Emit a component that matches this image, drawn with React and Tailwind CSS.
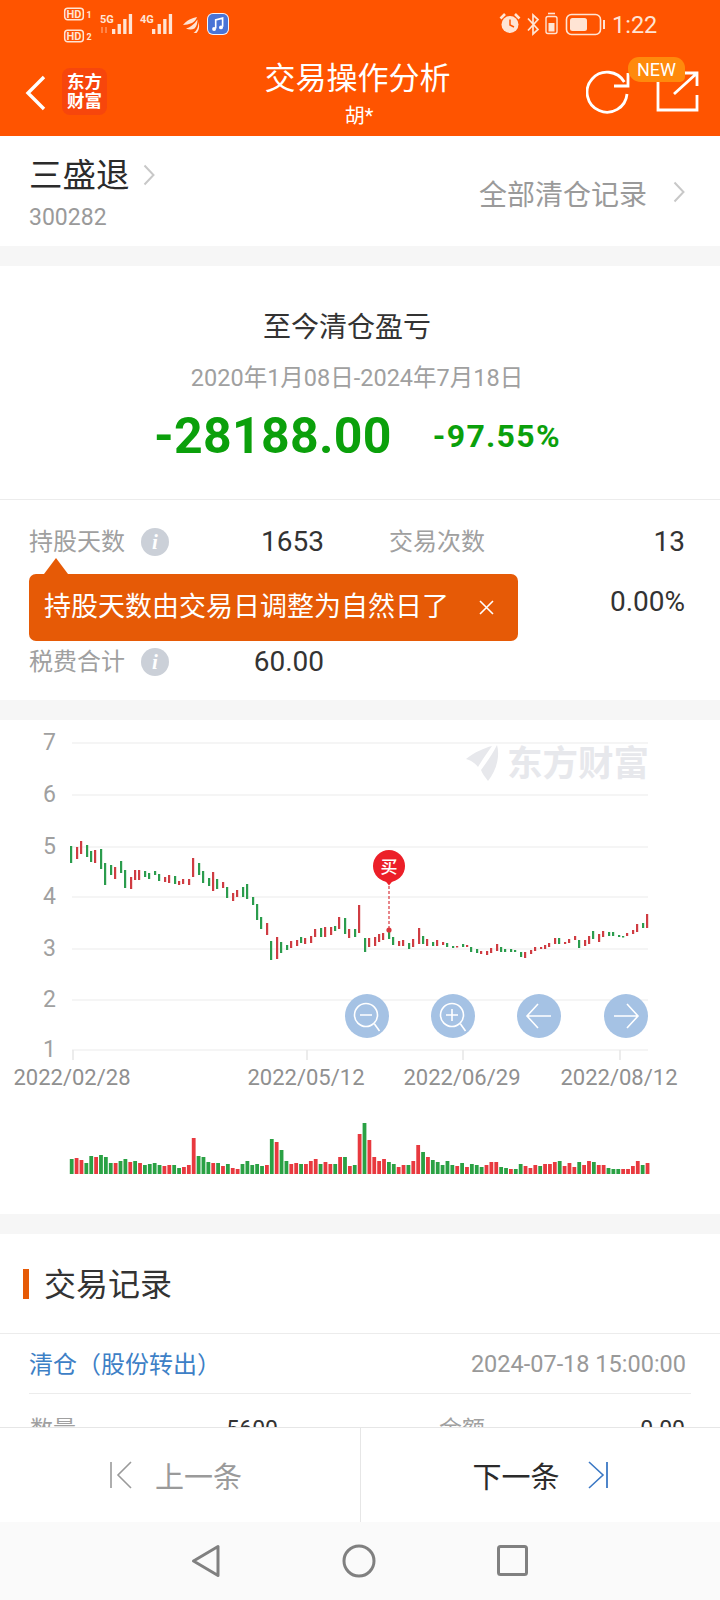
const candles = [
  [71, 846, 863, 'g'], [77, 847, 859, 'r'], [81, 841, 854, 'r'], [87, 845, 857, 'g'], [91, 851, 862, 'g'], [95, 850, 863, 'r'],
  [101, 849, 869, 'g'], [105, 863, 885, 'g'], [111, 865, 875, 'g'], [115, 867, 879, 'r'], [121, 861, 873, 'g'], [125, 870, 888, 'g'],
  [131, 877, 889, 'r'], [135, 870, 880, 'r'], [139, 870, 880, 'r'], [145, 871, 877, 'g'], [149, 873, 879, 'g'], [155, 871, 875, 'g'],
  [159, 874, 881, 'g'], [165, 877, 882, 'r'], [169, 875, 883, 'r'], [175, 876, 884, 'g'], [179, 881, 885, 'r'], [183, 879, 884, 'r'],
  [189, 879, 885, 'r'], [193, 858, 877, 'r'], [199, 863, 875, 'g'], [203, 871, 883, 'g'], [209, 878, 886, 'g'], [213, 872, 891, 'r'],
  [217, 879, 889, 'g'], [223, 882, 888, 'r'], [227, 887, 898, 'g'], [233, 893, 901, 'r'], [237, 890, 897, 'r'], [243, 887, 897, 'g'],
  [247, 884, 899, 'g'], [253, 897, 905, 'g'], [257, 904, 920, 'g'], [261, 917, 929, 'g'], [267, 923, 935, 'r'], [271, 941, 960, 'g'],
  [277, 937, 959, 'r'], [281, 942, 953, 'g'], [287, 945, 950, 'g'], [291, 941, 948, 'r'], [297, 940, 946, 'r'], [301, 937, 943, 'g'],
  [305, 938, 944, 'r'], [311, 936, 943, 'r'], [315, 929, 937, 'r'], [321, 928, 937, 'g'], [325, 927, 937, 'r'], [331, 927, 935, 'r'],
  [335, 926, 931, 'g'], [339, 917, 929, 'r'], [345, 918, 934, 'g'], [349, 929, 938, 'r'], [355, 929, 937, 'g'], [359, 905, 933, 'r'],
  [365, 938, 952, 'g'], [369, 938, 947, 'r'], [375, 937, 946, 'r'], [379, 934, 942, 'r'], [383, 933, 940, 'r'], [389, 931, 939, 'g'],
  [393, 937, 945, 'g'], [399, 941, 946, 'r'], [403, 940, 946, 'r'], [409, 943, 949, 'g'], [413, 939, 947, 'r'], [419, 928, 944, 'r'],
  [423, 936, 944, 'g'], [427, 939, 946, 'r'], [433, 942, 946, 'g'], [437, 940, 946, 'r'], [443, 942, 945, 'r'], [447, 943, 947, 'g'],
  [453, 946, 948, 'g'], [457, 946, 947.5, 'r'], [463, 944, 947, 'g'], [467, 945, 947, 'r'], [471, 947, 952, 'g'], [477, 949, 953, 'g'],
  [481, 951, 954, 'r'], [487, 951, 955, 'r'], [491, 948, 953, 'r'], [497, 944, 951, 'r'], [501, 947, 952, 'g'], [505, 949, 952, 'g'],
  [511, 949, 952, 'g'], [515, 950, 952, 'g'], [521, 952, 957, 'g'], [525, 952, 958, 'r'], [531, 950, 954, 'r'], [535, 947, 951, 'r'],
  [541, 947, 949, 'r'], [545, 945, 949, 'r'], [549, 943, 947, 'r'], [555, 938, 944, 'r'], [559, 938, 944, 'g'], [565, 942, 944, 'r'],
  [569, 939, 943, 'r'], [575, 936, 940, 'r'], [579, 940, 948, 'g'], [585, 940, 946, 'r'], [589, 936, 944, 'r'], [593, 931, 939, 'g'],
  [599, 934, 942, 'r'], [603, 931, 937, 'r'], [609, 932, 936, 'g'], [613, 932, 936, 'g'], [619, 935, 937, 'g'], [623, 936, 937.5, 'g'],
  [627, 933, 936, 'r'], [633, 930, 934, 'r'], [637, 924, 932, 'r'], [643, 923, 928, 'g'], [647, 914, 928, 'r'],
];

// volume bars: height above the baseline, colour
const volumes = [
  [15, 'g'], [16, 'r'], [14, 'r'], [11, 'g'], [18, 'g'], [17, 'r'], [19, 'g'], [17, 'g'], [11, 'g'], [11, 'r'], [13, 'g'], [15, 'g'],
  [12, 'r'], [13, 'g'], [11, 'r'], [9, 'g'], [10, 'g'], [11, 'g'], [9, 'g'], [8, 'r'], [9, 'r'], [9, 'g'], [6, 'g'], [7, 'r'],
  [9, 'r'], [36, 'r'], [18, 'g'], [17, 'g'], [12, 'g'], [11, 'r'], [11, 'g'], [8, 'r'], [10, 'g'], [6, 'r'], [5, 'r'], [10, 'g'],
  [13, 'g'], [9, 'g'], [10, 'g'], [8, 'g'], [9, 'r'], [35, 'g'], [32, 'r'], [24, 'g'], [13, 'g'], [10, 'r'], [11, 'r'], [10, 'g'],
  [10, 'r'], [13, 'r'], [15, 'r'], [10, 'g'], [12, 'r'], [10, 'r'], [10, 'g'], [17, 'r'], [17, 'g'], [8, 'r'], [9, 'g'], [40, 'r'],
  [51, 'g'], [34, 'r'], [17, 'r'], [13, 'r'], [15, 'r'], [12, 'g'], [10, 'g'], [7, 'r'], [9, 'r'], [9, 'g'], [13, 'r'], [29, 'r'],
  [22, 'g'], [17, 'r'], [14, 'g'], [12, 'g'], [9, 'g'], [13, 'g'], [9, 'g'], [8, 'r'], [11, 'g'], [7, 'r'], [10, 'g'], [9, 'g'],
  [7, 'g'], [9, 'r'], [12, 'r'], [12, 'r'], [7, 'g'], [6, 'g'], [5, 'r'], [5, 'g'], [10, 'g'], [8, 'r'], [6, 'r'], [9, 'r'],
  [8, 'g'], [10, 'r'], [10, 'r'], [12, 'r'], [13, 'g'], [8, 'r'], [11, 'r'], [7, 'r'], [12, 'g'], [9, 'r'], [13, 'r'], [12, 'g'],
  [9, 'r'], [9, 'r'], [6, 'g'], [5, 'g'], [5, 'g'], [5, 'r'], [5, 'r'], [8, 'r'], [13, 'r'], [9, 'g'], [11, 'r'],
];

const gridLines = [
  { label: '7', y: 743 }, { label: '6', y: 795 }, { label: '5', y: 847 }, { label: '4', y: 897 },
  { label: '3', y: 949 }, { label: '2', y: 1000 }, { label: '1', y: 1050 },
];
const dates = [
  { label: '2022/02/28', x: 72 }, { label: '2022/05/12', x: 306 }, { label: '2022/06/29', x: 462 }, { label: '2022/08/12', x: 619 },
];

function StatusBar() {
  const signal = (x) => [0, 1, 2, 3].map((i) => (
    <rect key={i} x={x + i * 5.6} y={29 - i * 5} width="3.300" height={5 + i * 5} fill="#ffe4d4" />
  ));
  return (
    <div className="relative h-[48px] text-[#ffe4d4]">
      <svg width="240" height="48" className="absolute left-[60px] top-0">
        <rect x="4.700" y="8.200" width="18.600" height="11.600" rx="3" fill="none" stroke="#ffe4d4" strokeWidth="1.500" />
        <text x="14" y="18" textAnchor="middle" fontSize="11" fontWeight="700" fill="#ffe4d4">HD</text>
        <text x="29" y="18" textAnchor="middle" fontSize="9" fontWeight="700" fill="#ffe4d4">1</text>
        <rect x="4.700" y="30.200" width="18.600" height="11.600" rx="3" fill="none" stroke="#ffe4d4" strokeWidth="1.500" />
        <text x="14" y="40" textAnchor="middle" fontSize="11" fontWeight="700" fill="#ffe4d4">HD</text>
        <text x="29" y="40" textAnchor="middle" fontSize="9" fontWeight="700" fill="#ffe4d4">2</text>
        <text x="40" y="23" fontSize="11" fontWeight="700" fill="#ffe4d4">5G</text>
        <text x="80" y="23" fontSize="11" fontWeight="700" fill="#ffe4d4">4G</text>
        <path d="M42 27v6M46 27v6" stroke="#ffb48f" strokeWidth="1" />
        <g>{signal(52)}</g>
        <g>{signal(92)}</g>
        {/* app notification swoosh */}
        <path d="M123 25c4-5 9-7 14-8-1 3-3 5-5 6-3 1-6 2-9 2z" fill="#ffe4d4" />
        <path d="M126 28.500c4-1 8-4 11.500-9 0 4-1 7-3 9-3 1.500-6 1-8.500 0z" fill="#ffe4d4" />
        <path d="M133.500 33c3-2 5-6 5-11 1 4 1 8-2 11z" fill="#ffe4d4" />
      </svg>
      <div className="absolute left-[208px] top-[14px] flex h-[20px] w-[20px] items-center justify-center rounded-[5px] bg-[#4a74d6] ring-1 ring-[#f3f3fb]">
        <svg width="14" height="15" viewBox="0 0 12 13" fill="none">
          <path d="M4 10V2.500L10 1v7.500" stroke="#fff" strokeWidth="1.400" />
          <circle cx="2.600" cy="10.400" r="1.700" fill="#fff" />
          <circle cx="8.600" cy="9" r="1.700" fill="#fff" />
        </svg>
      </div>
      <svg width="110" height="48" className="absolute left-[498px] top-0" fill="none">
        <circle cx="12" cy="24.500" r="8.500" fill="#ffe4d4" />
        <path d="M12 19.500V25L16 27" stroke="#ff5500" strokeWidth="1.500" />
        <path d="M2.500 18.500l4.500-4.500M21.500 18.500l-4.500-4.500" stroke="#ffe4d4" strokeWidth="2.600" />
        <path d="M30 18.500l10 11-5 4.500V15l5 4.500-10 11" stroke="#ffe4d4" strokeWidth="1.700" />
        <rect x="48" y="16.500" width="11" height="17" rx="2" stroke="#ffe4d4" strokeWidth="1.400" />
        <rect x="50.500" y="23" width="6" height="8.500" fill="#ffe4d4" />
        <path d="M50 13.500h7" stroke="#ffe4d4" strokeWidth="1.600" />
        <rect x="68.500" y="14.500" width="34" height="20" rx="5" stroke="#ffe4d4" strokeWidth="1.600" />
        <rect x="72" y="18" width="17" height="13" rx="2.500" fill="#ffe4d4" />
        <path d="M106 20v9" stroke="#ffe4d4" strokeWidth="2" />
      </svg>
      <span className="absolute left-[612px] top-[10px] text-[23.500px] leading-[30px]">1:22</span>
    </div>
  );
}

function Header() {
  return (
    <header className="h-[136px] shrink-0 bg-[#ff5400] text-white">
      <StatusBar />
      <div className="relative h-[88px]">
        <svg width="24" height="36" viewBox="0 0 24 36" fill="none" className="absolute left-[24px] top-[27px]">
          <path d="M20 2L4 18l16 16" stroke="#fff" strokeWidth="3.400" />
        </svg>
        <div className="absolute left-[62px] top-[20px] flex h-[47px] w-[45px] items-center justify-center rounded-[8px] bg-[#f7460c] text-center text-[17.500px] font-bold leading-[19px]">
          东方<br />财富
        </div>
        <div className="flex flex-col items-center pr-[5px] pt-[13px]">
          <span className="text-[31px] leading-[36px]">交易操作分析</span>
          <span className="mt-[7px] pl-[3px] text-[20px] leading-[24px]">胡*</span>
        </div>
        <svg width="44" height="44" viewBox="0 0 44 44" fill="none" className="absolute left-[586px] top-[22px]">
          <path d="M38.300 12A20 20 0 1 0 41 24" stroke="#fff" strokeWidth="2.800" />
          <path d="M42 3v13H28" stroke="#fff" strokeWidth="2.800" />
        </svg>
        <svg width="44" height="44" viewBox="0 0 44 44" fill="none" className="absolute left-[656px] top-[22px]">
          <path d="M24 3H2v37h39V25" stroke="#fff" strokeWidth="2.800" />
          <path d="M18 24L40 4M28 3h13v13" stroke="#fff" strokeWidth="2.800" />
        </svg>
        <span className="absolute left-[628px] top-[9px] flex h-[25px] w-[57px] items-center justify-center rounded-t-[11px] rounded-bl-[13px] rounded-br-[5px] bg-[#ff8a0c] text-[18px] leading-none">NEW</span>
      </div>
    </header>
  );
}

function Chevron({ className }) {
  return (
    <svg width="12" height="22" viewBox="0 0 12 22" fill="none" className={className}>
      <path d="M1.500 1.500L10.500 11l-9 9.500" stroke="#c8c8c8" strokeWidth="2" />
    </svg>
  );
}

function StockRow() {
  return (
    <div className="flex h-[110px] shrink-0 items-start justify-between bg-white pl-[29px] pr-[35px]">
      <div>
        <div className="flex items-center pt-[20px]">
          <span className="text-[33.500px] leading-[40px] text-[#2b2b2b]">三盛退</span>
          <Chevron className="ml-[13px] -mt-[2px]" />
        </div>
        <div className="mt-[7px] text-[23px] leading-[30px] text-[#9a9a9a]">300282</div>
      </div>
      <div className="flex items-center pt-[38px]">
        <span className="pt-[4px] text-[28px] leading-[36px] text-[#9a9a9a]">全部清仓记录</span>
        <Chevron className="ml-[26px] -mt-[4px]" />
      </div>
    </div>
  );
}

function InfoDot() {
  return (
    <span className="ml-[16px] flex h-[28px] w-[28px] items-center justify-center rounded-full bg-[#cbd0d8] font-['Liberation_Serif',serif] text-[21px] font-bold italic leading-none text-white">i</span>
  );
}

function Summary() {
  return (
    <section className="relative h-[434px] shrink-0 bg-white">
      <div className="flex h-[234px] flex-col items-center border-b border-[#ececec]">
        <div className="mt-[42px] pr-[26px] text-[28px] leading-[40px] text-[#333]">至今清仓盈亏</div>
        <div className="mt-[14px] pr-[6px] text-[23.500px] leading-[32px] text-[#a0a0a0]">2020年1月08日-2024年7月18日</div>
        <div className="mt-[12px] flex items-center pr-[5px] font-bold text-[#0ba00b]">
          <span className="text-[50px] leading-[60px] tracking-[0.300px]">-28188.00</span>
          <span className="ml-[41px] text-[32px] leading-[60px] tracking-[1.300px]">-97.55%</span>
        </div>
      </div>
      <div className="pl-[29px] pr-[35px] pt-[12px] text-[28px]">
        <div className="flex h-[60px] items-center">
          <span className="text-[24px] text-[#a0a0a0]">持股天数</span>
          <InfoDot />
          <span className="w-[155px] text-right text-[#333]">1653</span>
          <span className="ml-[65px] text-[24px] text-[#a0a0a0]">交易次数</span>
          <span className="flex-1 text-right text-[#333]">13</span>
        </div>
        <div className="flex h-[60px] items-center justify-end">
          <span className="text-[#333]">0.00%</span>
        </div>
        <div className="flex h-[60px] items-center">
          <span className="text-[24px] text-[#a0a0a0]">税费合计</span>
          <InfoDot />
          <span className="w-[155px] text-right text-[#333]">60.00</span>
        </div>
      </div>
      {/* hint bubble under the holding days label */}
      <div className="absolute left-[29px] top-[308px] flex h-[67px] w-[489px] items-center rounded-[7px] bg-[#e65a06] pl-[15px] text-[27px] text-white">
        <span className="absolute left-[15px] -top-[16px] h-0 w-0 border-x-[12px] border-b-[16px] border-x-transparent border-b-[#e65a06]" />
        持股天数由交易日调整为自然日了
        <span className="ml-[29px]">
          <svg width="17" height="17" viewBox="0 0 17 17" fill="none">
            <path d="M2 2l13 13M15 2L2 15" stroke="#fff" strokeWidth="1.600" />
          </svg>
        </span>
      </div>
    </section>
  );
}

function RoundButton({ x }) {
  return <circle cx={x} cy="1016" r="22" fill="#a5c2e4" />;
}

function Chart() {
  const axisBase = 720;
  return (
    <section className="mt-[20px] h-[494px] shrink-0 bg-white">
      <svg width="720" height="494" viewBox={`0 ${axisBase} 720 494`} fill="none" className="block">
        {gridLines.map((g) => (
          <g key={g.label}>
            <path d={`M72 ${g.y}H648`} stroke="#f2f2f2" strokeWidth="1.600" />
            <text x="49.500" y={g.y + 7} textAnchor="middle" fontSize="23" fill="#a0a0a0">{g.label}</text>
          </g>
        ))}

        {/* watermark */}
        <path d="M466 759c9-7 18-11 26-13-4 6-10 14-14 21-3-4-8-7-12-8z" fill="#e7e8ec" />
        <path d="M497 745c3 10 0 25-9 36-3-4-6-8-7-11 6-8 12-17 16-25z" fill="#e7e8ec" />
        <text x="507" y="776" fontSize="35.500" fontWeight="700" fill="#e7e8ec" fontFamily="'Noto Sans CJK SC', sans-serif">东方财富</text>

        {candles.map(([x, top, bottom, c]) => (
          <rect key={x} x={x - 1} y={top} width="2.200" height={bottom - top} fill={c === 'r' ? '#cf3c42' : '#2b9c4d'} />
        ))}

        {/* buy marker */}
        <path d="M389 886v44" stroke="#d9363c" strokeWidth="1.200" strokeDasharray="3 2" />
        <circle cx="389" cy="930" r="2.600" fill="#d9363c" />
        <circle cx="389" cy="866" r="16" fill="#ec1f28" />
        <path d="M385 880.500l4 5 4-5z" fill="#ec1f28" />
        <text x="389" y="873" textAnchor="middle" fontSize="17" fontWeight="500" fill="#fff">买</text>

        {dates.map((d) => (
          <g key={d.label}>
            <path d={`M${d.x + 1} 1050v10`} stroke="#e6e6e6" strokeWidth="1.500" />
            <text x={d.x} y="1085" textAnchor="middle" fontSize="22" fill="#909090">{d.label}</text>
          </g>
        ))}

        <RoundButton x={367} />
        <RoundButton x={453} />
        <RoundButton x={539} />
        <RoundButton x={626} />
        {/* zoom out */}
        <circle cx="366" cy="1015" r="11.500" stroke="#fff" strokeWidth="1.600" />
        <path d="M360 1015h12M374.500 1024l5 7" stroke="#fff" strokeWidth="1.600" />
        {/* zoom in */}
        <circle cx="452" cy="1015" r="11.500" stroke="#fff" strokeWidth="1.600" />
        <path d="M446 1015h12M452 1009v12M460.500 1024l5 7" stroke="#fff" strokeWidth="1.600" />
        {/* pan left / right */}
        <path d="M527 1016h24M538 1004l-11 12 11 12" stroke="#fff" strokeWidth="1.600" />
        <path d="M614 1016h24M627 1004l11 12-11 12" stroke="#fff" strokeWidth="1.600" />

        {volumes.map(([h, c], i) => (
          <rect key={i} x={69.800 + i * 4.880} y={1174 - h} width="3.800" height={h} fill={c === 'r' ? '#e8393f' : '#2aa144'} />
        ))}
      </svg>
    </section>
  );
}

function Records() {
  return (
    <section className="mt-[20px] flex-1 bg-white">
      <div className="flex h-[100px] items-center border-b border-[#ececec] pl-[23px]">
        <span className="h-[30px] w-[6px] bg-[#e65a06]" />
        <span className="ml-[15px] pt-[3px] text-[32px] leading-[40px] text-[#333]">交易记录</span>
      </div>
      <div className="mx-[29px] flex h-[60px] items-center justify-between border-b border-[#ececec] pr-[5px] pt-[2px]">
        <span className="text-[24px] text-[#3d80c6] [text-spacing-trim:space-all]">清仓（股份转出）</span>
        <span className="text-[23.500px] text-[#999]">2024-07-18 15:00:00</span>
      </div>
      {/* next row runs under the pager */}
      <div className="mx-[29px] flex h-[80px] items-start pl-[1px] pr-[6px] pt-[19px] text-[23px]">
        <span className="text-[#a0a0a0]">数量</span>
        <span className="w-[202px] text-right text-[#333]">5600</span>
        <span className="ml-[161px] text-[#a0a0a0]">金额</span>
        <span className="flex-1 text-right text-[#333]">0.00</span>
      </div>
    </section>
  );
}

function Pager() {
  return (
    <div className="flex h-[95px] shrink-0 border-t border-[#e6e6e6] bg-white text-[29px]">
      <button className="flex w-[360px] items-center justify-center pr-[8px] text-[#9a9a9a]">
        <svg width="24" height="28" viewBox="0 0 24 28" fill="none">
          <path d="M1 1v26" stroke="#9a9a9a" strokeWidth="1.600" />
          <path d="M21 1L8 14l13 13" stroke="#9a9a9a" strokeWidth="1.600" />
        </svg>
        <span className="ml-[21px] pt-[8px]">上一条</span>
      </button>
      <button className="flex flex-1 items-center justify-center border-l border-[#e6e6e6] text-[#2b2b2b]">
        <span className="pt-[8px]">下一条</span>
        <svg width="22" height="28" viewBox="0 0 22 28" fill="none" className="ml-[27px]">
          <path d="M2 1l14 13L2 27" stroke="#3b78c4" strokeWidth="1.600" />
          <path d="M20 1v26" stroke="#3b78c4" strokeWidth="1.800" />
        </svg>
      </button>
    </div>
  );
}

function SystemNav() {
  return (
    <div className="flex h-[78px] shrink-0 items-center justify-between bg-[#fafafa] pl-[191px] pr-[192px] pb-[1px]">
      <svg width="30" height="34" viewBox="0 0 30 34" fill="none">
        <path d="M27 2.500v29L2.500 17z" stroke="#808080" strokeWidth="3" strokeLinejoin="round" />
      </svg>
      <svg width="34" height="34" viewBox="0 0 34 34" fill="none">
        <circle cx="17" cy="17" r="15" stroke="#808080" strokeWidth="3" />
      </svg>
      <svg width="31" height="31" viewBox="0 0 31 31" fill="none">
        <rect x="1.500" y="1.500" width="28" height="28" rx="2" stroke="#808080" strokeWidth="3" />
      </svg>
    </div>
  );
}

export default function App() {
  return (
    <div className="flex h-[1600px] w-[720px] flex-col overflow-hidden bg-[#f6f6f6] font-['Roboto','Noto_Sans_CJK_SC',sans-serif]">
      <Header />
      <div className="flex min-h-0 flex-1 flex-col overflow-hidden">
        <StockRow />
        <div className="h-[20px] shrink-0" />
        <Summary />
        <Chart />
        <Records />
      </div>
      <Pager />
      <SystemNav />
    </div>
  );
}
